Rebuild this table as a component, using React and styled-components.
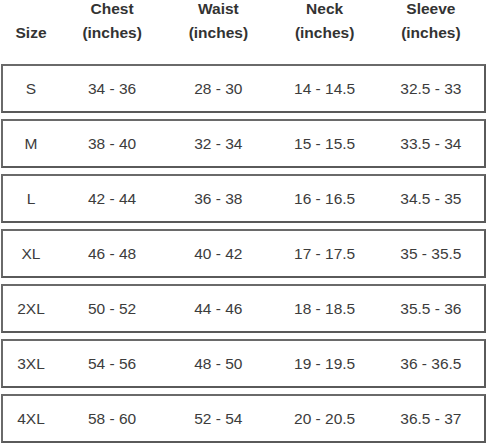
import React from "react";
import styled, { createGlobalStyle } from "styled-components";

const Global = createGlobalStyle`
  html, body { margin: 0; padding: 0; background: #ffffff; }
  body { font-family: "Liberation Sans", Arial, sans-serif; }
`;

const Page = styled.div`
  width: 488px;
  height: 448px;
  overflow: hidden;
  background: #fff;
`;

const Grid = `
  display: grid;
  grid-template-columns: 56px repeat(4, 1fr);
  align-items: center;
`;

const Header = styled.div`
  ${Grid}
  width: 485px;
  margin-left: 1px;
  padding: 0 2px;
  box-sizing: border-box;
  height: 42px;
  margin-bottom: 22px;
  align-items: end;
`;

const HeadCell = styled.div`
  text-align: center;
  font-weight: bold;
  font-size: 15.5px;
  color: #333;
`;

const Line = styled.span`
  display: block;
  line-height: 18px;
  & + & { margin-top: 6px; }
`;

const Rows = styled.div`
  display: flex;
  flex-direction: column;
  gap: 6px;
`;

const Row = styled.div`
  ${Grid}
  width: 485px;
  height: 49px;
  margin-left: 1px;
  box-sizing: border-box;
  border: 2px solid #6a6a6a;
  border-right-color: #5a5a5a;
  border-bottom-color: #5a5a5a;
`;

const Cell = styled.div`
  text-align: center;
  font-size: 15.5px;
  color: #3c3c3c;
  line-height: 18px;
`;

const data = [
  ["S", "34 - 36", "28 - 30", "14 - 14.5", "32.5 - 33"],
  ["M", "38 - 40", "32 - 34", "15 - 15.5", "33.5 - 34"],
  ["L", "42 - 44", "36 - 38", "16 - 16.5", "34.5 - 35"],
  ["XL", "46 - 48", "40 - 42", "17 - 17.5", "35 - 35.5"],
  ["2XL", "50 - 52", "44 - 46", "18 - 18.5", "35.5 - 36"],
  ["3XL", "54 - 56", "48 - 50", "19 - 19.5", "36 - 36.5"],
  ["4XL", "58 - 60", "52 - 54", "20 - 20.5", "36.5 - 37"],
];

const heads = ["Chest", "Waist", "Neck", "Sleeve"];

export default function App() {
  return (
    <Page>
      <Global />
      <Header>
        <HeadCell>
          <Line>Size</Line>
        </HeadCell>
        {heads.map((h) => (
          <HeadCell key={h}>
            <Line>{h}</Line>
            <Line>(inches)</Line>
          </HeadCell>
        ))}
      </Header>
      <Rows>
        {data.map((r) => (
          <Row key={r[0]}>
            {r.map((c, i) => (
              <Cell key={i}>{c}</Cell>
            ))}
          </Row>
        ))}
      </Rows>
    </Page>
  );
}
